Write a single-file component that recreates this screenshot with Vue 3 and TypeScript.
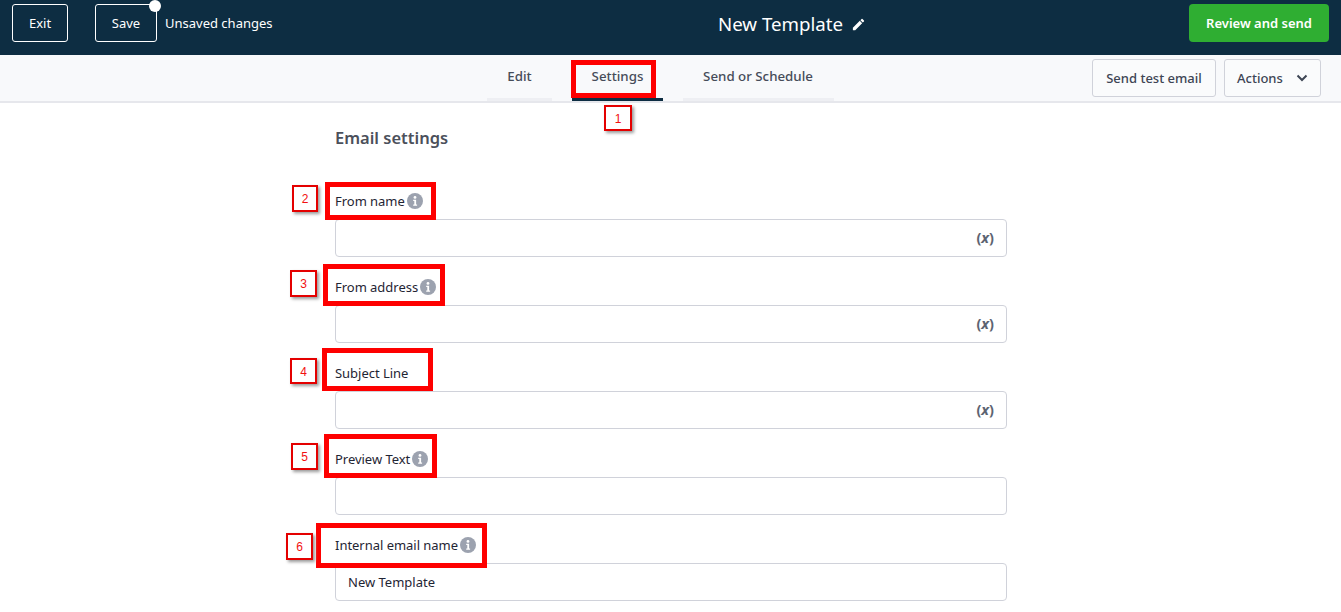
<script setup lang="ts">
interface Field { label: string; info: boolean; vari: boolean; value: string }
const fields: Field[] = [
  { label: 'From name', info: true, vari: true, value: '' },
  { label: 'From address', info: true, vari: true, value: '' },
  { label: 'Subject Line', info: false, vari: true, value: '' },
  { label: 'Preview Text', info: true, vari: false, value: '' },
  { label: 'Internal email name', info: true, vari: false, value: 'New Template' },
]
const boxes = [
  { left: 571, top: 60, width: 85, height: 38 },
  { left: 325, top: 182, width: 111, height: 38 },
  { left: 323, top: 264, width: 122, height: 42 },
  { left: 322, top: 348, width: 111, height: 43 },
  { left: 324, top: 434, width: 113, height: 44 },
  { left: 316, top: 523, width: 171, height: 45 },
]
const tags = [
  { n: 1, left: 604, top: 105, width: 28, height: 26 },
  { n: 2, left: 292, top: 185, width: 26, height: 27 },
  { n: 3, left: 290, top: 270, width: 27, height: 27 },
  { n: 4, left: 290, top: 358, width: 27, height: 26 },
  { n: 5, left: 291, top: 443, width: 27, height: 27 },
  { n: 6, left: 286, top: 533, width: 27, height: 27 },
]
const px = (b: { left: number; top: number; width: number; height: number }) => ({
  left: b.left + 'px', top: b.top + 'px', width: b.width + 'px', height: b.height + 'px',
})
</script>

<template>
  <div class="page">
    <header class="top">
      <div class="top-left">
        <button class="ghost exit">Exit</button>
        <button class="ghost save">Save<span class="dot"></span></button>
        <span class="unsaved">Unsaved changes</span>
      </div>
      <div class="title">
        <span>New Template</span>
        <svg width="15" height="15" viewBox="0 0 24 24" fill="#fff"><path d="M3 17.25V21h3.75L17.81 9.94l-3.75-3.75L3 17.25zM20.71 7.04a1 1 0 0 0 0-1.41l-2.34-2.34a1 1 0 0 0-1.41 0l-1.83 1.83 3.75 3.75 1.83-1.83z"/></svg>
      </div>
      <button class="send">Review and send</button>
    </header>

    <nav class="bar">
      <div class="tabs">
        <div class="tab edit">Edit</div>
        <div class="tab settings">Settings</div>
        <div class="tab schedule">Send or Schedule</div>
      </div>
      <div class="bar-actions">
        <button class="light test">Send test email</button>
        <button class="light actions">
          Actions
          <svg width="12" height="8" viewBox="0 0 12 8" fill="none" stroke="#3d4554" stroke-width="2"><path d="M1.5 1.5 6 6l4.5-4.5"/></svg>
        </button>
      </div>
    </nav>

    <main class="form">
      <h2>Email settings</h2>
      <div v-for="f in fields" :key="f.label" class="field">
        <div class="label">
          <span>{{ f.label }}</span>
          <svg v-if="f.info" width="16" height="16" viewBox="0 0 16 16">
            <circle cx="8" cy="8" r="8" fill="#9ca2af"/>
            <circle cx="8" cy="4.4" r="1.4" fill="#fff"/>
            <path d="M6.2 6.8h2.9v4.7h1v1.2H6.2v-1.2h1.1V8H6.2z" fill="#fff"/>
          </svg>
        </div>
        <div class="input">
          <span>{{ f.value }}</span>
          <span v-if="f.vari" class="vari">(<i>x</i>)</span>
        </div>
      </div>
    </main>

    <div v-for="(b, i) in boxes" :key="'b' + i" class="mark" :style="px(b)"></div>
    <div v-for="t in tags" :key="'t' + t.n" class="tag" :style="px(t)">{{ t.n }}</div>
  </div>
</template>

<style scoped>
.page {
  position: relative;
  width: 1341px;
  height: 612px;
  overflow: hidden;
  background: #fff;
  font-family: "Noto Sans", "Open Sans", sans-serif;
  font-size: 13px;
  color: #1f2534;
}
button { font-family: inherit; font-size: 13px; cursor: pointer; }
.top {
  height: 55px;
  box-sizing: border-box;
  background: #0d2d42;
  display: flex;
  align-items: flex-start;
  justify-content: space-between;
  padding: 4px 12px 0;
  color: #fff;
  position: relative;
}
.top-left { display: flex; align-items: center; }
.ghost {
  height: 38px;
  background: transparent;
  border: 1px solid #fff;
  border-radius: 3px;
  color: #fff;
  padding: 0;
  position: relative;
}
.exit { width: 56px; margin-right: 27px; }
.save { width: 62px; margin-right: 9px; }
.dot {
  position: absolute;
  top: -5px;
  right: -5px;
  width: 12px;
  height: 12px;
  border-radius: 50%;
  background: #fff;
}
.unsaved { font-size: 13px; margin-top: -1px; margin-left: -1px; }
.title {
  position: absolute;
  left: 718px;
  top: 11px;
  display: flex;
  align-items: center;
  gap: 8px;
  font-size: 18.7px;
  line-height: 26px;
}
.send {
  width: 140px;
  height: 38px;
  background: #2fae32;
  border: 0;
  border-radius: 4px;
  color: #fff;
  font-weight: 600;
  font-size: 13px;
}
.bar {
  background: #f8f9fb;
  border-bottom: 2px solid #e6e7ec;
  height: 46px;
  position: relative;
}
.tabs { position: absolute; left: 487px; top: 0; height: 46px; display: flex; }
.tab {
  height: 46px;
  box-sizing: border-box;
  text-align: center;
  padding-top: 12px;
  line-height: 18px;
  font-size: 13.3px;
  font-weight: 500;
  color: #464c59;
  border-bottom: 3px solid #eeeff3;
}
.edit { width: 65px; margin-right: 20px; }
.settings { width: 91px; margin-right: 20px; border-bottom-color: #0d2d42; }
.schedule { width: 151px; padding-right: 1px; }
.bar-actions { position: absolute; right: 20px; top: 4px; display: flex; gap: 8px; }
.light {
  height: 38px;
  background: #fafbfc;
  border: 1px solid #d0d2da;
  border-radius: 3px;
  color: #3d4554;
  padding: 0 12px;
  font-weight: 500;
}
.test { width: 124px; padding: 0; }
.actions { width: 97px; display: flex; align-items: center; justify-content: space-between; }
.form { width: 672px; margin-left: 335px; }
h2 {
  margin: 24px 0 0;
  font-size: 16.5px;
  line-height: 22px;
  font-weight: 600;
  color: #4b505b;
  height: 44px;
}
.field { height: 86px; display: flex; flex-direction: column; justify-content: flex-end; }
.label {
  display: flex;
  align-items: center;
  gap: 2px;
  height: 18px;
  margin-bottom: 9px;
  letter-spacing: -0.03px;
}
.input {
  height: 38px;
  box-sizing: border-box;
  border: 1px solid #d0d2da;
  border-radius: 4px;
  display: flex;
  align-items: center;
  justify-content: space-between;
  padding: 0 12px;
  background: #fff;
}
.vari { font-weight: 700; color: #5d6472; font-size: 14.5px; line-height: 18px; margin-top: -3px; }
.vari i { font-style: italic; }
.mark {
  position: absolute;
  box-sizing: border-box;
  border: 5px solid #fe0000;
}
.tag {
  position: absolute;
  box-sizing: border-box;
  border: 2px solid #e40000;
  background: #fff;
  color: #f21010;
  font-size: 12px;
  padding-top: 1px;
  display: flex;
  align-items: center;
  justify-content: center;
  box-shadow: 2px 2px 3px #9a9a9a;
  font-family: "Liberation Sans", sans-serif;
}
</style>
